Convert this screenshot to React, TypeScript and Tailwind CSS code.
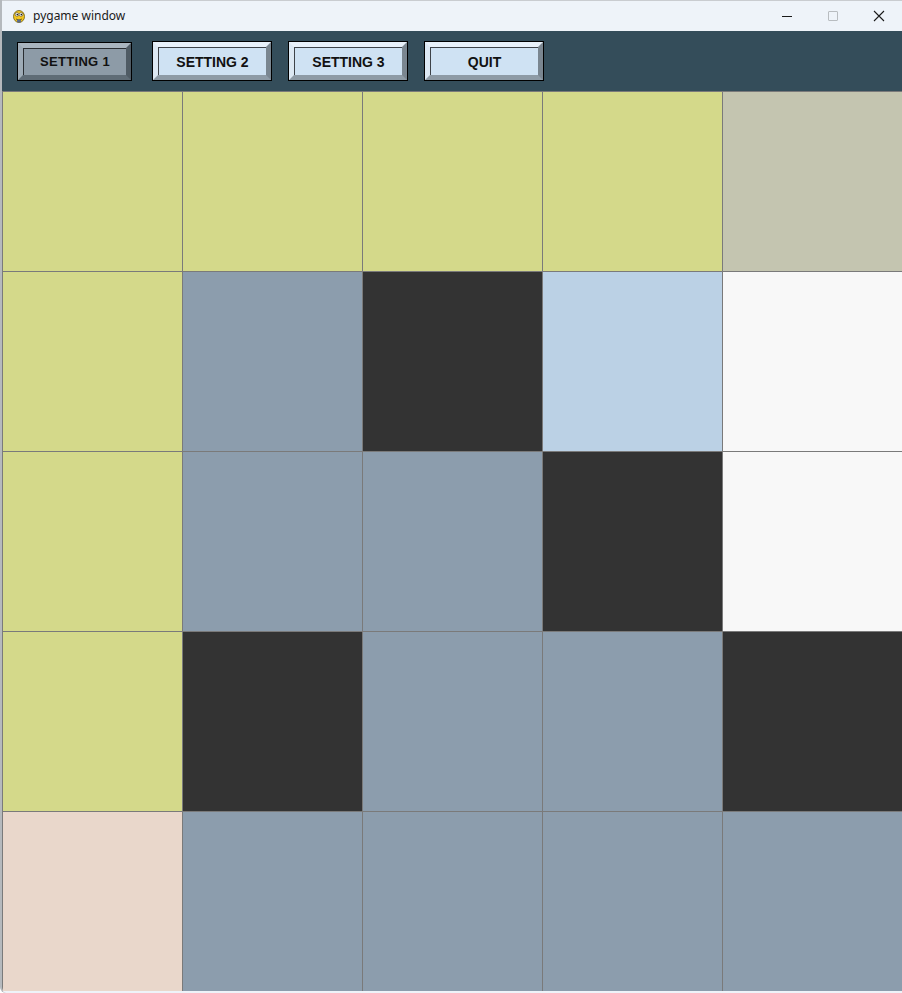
import React from "react";

const Y = "bg-[#d4d98a]";
const B = "bg-[#c4c5b0]";
const G = "bg-[#8c9dad]";
const D = "bg-[#333333]";
const L = "bg-[#bbd1e5]";
const W = "bg-[#f8f8f8]";
const P = "bg-[#e9d7cb]";

const rows: string[][] = [
  [Y, Y, Y, Y, B],
  [Y, G, D, L, W],
  [Y, G, G, D, W],
  [Y, D, G, G, D],
  [P, G, G, G, G],
];

function Btn({ label, pressed, cls }: { label: string; pressed?: boolean; cls: string }) {
  return (
    <div className={`${cls} border border-black box-border`}>
      {pressed ? (
        <div className="w-full h-full box-border border-[5px] border-t-[#a9b5bf] border-l-[#9eabb6] border-b-[#5f6c76] border-r-[#4f5b64] bg-[#8d9ba7]">
          <div className="w-full h-full border-t border-l border-black/70 flex items-center justify-center">
            <span className="text-[13px] font-bold tracking-[0.3px] text-[#111] font-['Liberation_Sans',Arial,sans-serif] leading-none">
              {label}
            </span>
          </div>
        </div>
      ) : (
        <div className="w-full h-full box-border border-[5px] border-t-[#e8f1fa] border-l-[#dce8f3] border-b-[#8e9ba6] border-r-[#7a8690] bg-[#cfe2f3]">
          <div className="w-full h-full border-t border-l border-black/70 flex items-center justify-center">
            <span className="text-[14px] font-bold text-[#111] font-['Liberation_Sans',Arial,sans-serif] leading-none">
              {label}
            </span>
          </div>
        </div>
      )}
    </div>
  );
}

export default function App() {
  return (
    <div className="w-[902px] h-[993px] overflow-hidden bg-[#eef3f9] flex flex-col box-border border-l-2 border-[#b5b9bd] rounded-bl-[6px]">
      {/* title bar */}
      <div className="h-[31px] flex items-center shrink-0 bg-[#eef3f9] border-t border-[#c9ccd0]">
        <svg width="16" height="16" viewBox="0 0 16 16" className="ml-[9px]">
          <ellipse cx="8" cy="8.5" rx="5.5" ry="6" fill="#f2c521" stroke="#6b5a10" strokeWidth="0.8" />
          <circle cx="6" cy="6.5" r="1.8" fill="#fff" stroke="#333" strokeWidth="0.5" />
          <circle cx="10" cy="6.5" r="1.8" fill="#fff" stroke="#333" strokeWidth="0.5" />
          <circle cx="6.3" cy="6.6" r="0.8" fill="#111" />
          <circle cx="10.3" cy="6.6" r="0.8" fill="#111" />
          <path d="M5 11 Q8 13 11 11" stroke="#6b5a10" strokeWidth="0.9" fill="none" />
          <rect x="6" y="11.5" width="4" height="3" rx="1" fill="#5a6b8a" />
        </svg>
        <span className="ml-[6px] text-[12px] text-[#1a1a1a] font-['Noto_Sans',sans-serif] leading-none">
          pygame window
        </span>
        <div className="ml-auto flex items-center h-full">
          <div className="w-[46px] h-full flex items-center justify-center">
            <div className="w-[10px] h-px bg-[#1a1a1a]" />
          </div>
          <div className="w-[46px] h-full flex items-center justify-center">
            <div className="w-[10px] h-[10px] border border-[#b8bcc0] rounded-[1px]" />
          </div>
          <div className="w-[46px] h-full flex items-center justify-center">
            <svg width="12" height="12" viewBox="0 0 12 12">
              <path d="M1 1 L11 11 M11 1 L1 11" stroke="#1a1a1a" strokeWidth="1.1" />
            </svg>
          </div>
        </div>
      </div>
      {/* header */}
      <div className="h-[60px] shrink-0 bg-[#344d5a] flex items-center">
        <Btn label="SETTING 1" pressed cls="ml-[15px] w-[115px] h-[39px]" />
        <Btn label="SETTING 2" cls="ml-[20px] w-[120px] h-[40px]" />
        <Btn label="SETTING 3" cls="ml-[16px] w-[120px] h-[40px]" />
        <Btn label="QUIT" cls="ml-[16px] w-[120px] h-[40px]" />
      </div>
      {/* grid */}
      <div className="flex flex-col">
        {rows.map((r, i) => (
          <div key={i} className="flex">
            {r.map((c, j) => (
              <div
                key={j}
                className={`${c} w-[180px] h-[180px] shrink-0 box-border border-t border-l border-[#7a7a7a]`}
              />
            ))}
          </div>
        ))}
      </div>
    </div>
  );
}
